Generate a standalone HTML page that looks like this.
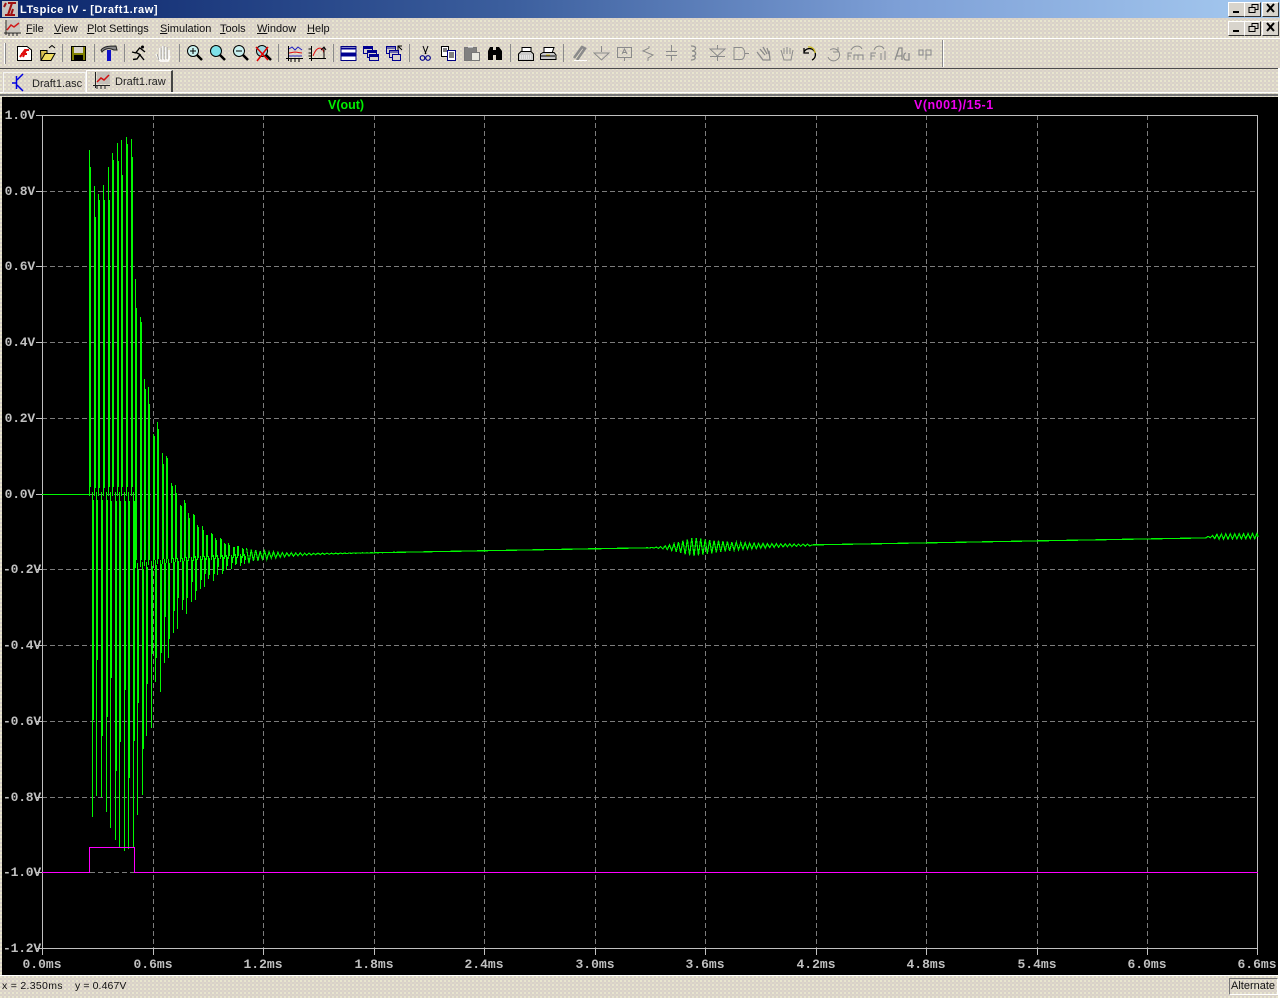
<!DOCTYPE html>
<html><head><meta charset="utf-8"><title>LTspice IV - [Draft1.raw]</title>
<style>
html,body{margin:0;padding:0;width:1280px;height:998px;overflow:hidden}
body{position:relative;font-family:"Liberation Sans",sans-serif;background-color:#d8d1c9;
background-image:radial-gradient(circle at 1px 1px,#f6f6d2 .75px,transparent .85px),radial-gradient(circle at 3px 3px,#efe6c8 .6px,transparent .7px);background-size:4px 4px}
.a{position:absolute;white-space:nowrap}
#title{left:0;top:0;width:1280px;height:18px;background:linear-gradient(90deg,#0a246a 0,#3c5f9e 40%,#7d9fd6 70%,#a6caf0 100%)}
#tt{left:20px;top:3px;color:#fff;font:bold 11px/14px "Liberation Sans",sans-serif;letter-spacing:.55px}
.m{top:23px;font:11px/13px "Liberation Sans",sans-serif;color:#111}
.m u{text-decoration:underline}
.b{width:15px;height:13px;background:#d8d4cc;border-top:1px solid #fff;border-left:1px solid #fff;border-right:1px solid #333;border-bottom:1px solid #333}
.l{width:32px;text-align:right;left:3px;color:#c0c0c0;font:bold 13px/14px "Liberation Mono",monospace;letter-spacing:-.2px}
.x{width:60px;text-align:center;top:958px;color:#c0c0c0;font:bold 13px/14px "Liberation Mono",monospace}
</style></head><body>
<div class="a" id="title"></div>
<svg class="a" style="left:2px;top:1px" width="16" height="16"><rect width="16" height="16" fill="#c8c4c0"/><path d="M6 2H14M10 2L6 14M3 14H8M11 8L9 14H13M2 6L4 2" stroke="#a01010" stroke-width="2" fill="none"/></svg>
<div class="a" id="tt">LTspice IV - [Draft1.raw]</div>
<div class="a b" style="left:1228px;top:2px"></div><div class="a b" style="left:1244px;top:2px"></div><div class="a b" style="left:1262px;top:2px"></div>
<div class="a b" style="left:1228px;top:21px"></div><div class="a b" style="left:1244px;top:21px"></div><div class="a b" style="left:1262px;top:21px"></div>
<svg class="a" style="left:1228px;top:0" width="52" height="38" fill="none" stroke="#000">
<path d="M5 12H11M5 31H11" stroke-width="2"/>
<path d="M21 7.500h6v5h-6zM24 7V4.500h6v5h-3M21 26.500h6v5h-6zM24 26V23.500h6v5h-3"/>
<path d="M39 4L46 12M46 4L39 12M39 23L46 31M46 23L39 31" stroke-width="2"/></svg>

<svg class="a" style="left:4px;top:19px" width="18" height="18"><path d="M2 1V16M0 14H17M5 14v3M9 14v3M13 14v3" stroke="#222" fill="none"/><rect x="3" y="1" width="13" height="12" fill="#c0bdb8" opacity=".7"/><path d="M3 11L7 6L10 8L15 4" stroke="#d01818" stroke-width="1.5" fill="none"/></svg>
<div class="a m" style="left:26px"><u>F</u>ile</div>
<div class="a m" style="left:54px"><u>V</u>iew</div>
<div class="a m" style="left:87px"><u>P</u>lot Settings</div>
<div class="a m" style="left:160px"><u>S</u>imulation</div>
<div class="a m" style="left:220px"><u>T</u>ools</div>
<div class="a m" style="left:257px"><u>W</u>indow</div>
<div class="a m" style="left:307px"><u>H</u>elp</div>

<div class="a" style="left:0;top:38px;width:1280px;height:1px;background:#fff"></div>
<div class="a" style="left:0;top:68px;width:1278px;height:1px;background:#4a4a4a"></div>
<div class="a" style="left:1278px;top:68px;width:2px;height:930px;background:#fff"></div>
<div class="a" style="left:0;top:92px;width:1278px;height:1px;background:#fff"></div>
<div class="a" style="left:0;top:94px;width:1278px;height:2px;background:#777"></div>

<svg class="a" style="left:0;top:38px" width="1000" height="31" fill="none">
<g transform="translate(0,-38)">
<path d="M4.500 43V64" stroke="#fff" stroke-width="1"/><path d="M5.500 43V64" stroke="#888"/>
<g stroke="#8a8a8a"><path d="M62.500 44V62M94.500 44V62M124.500 44V62M179.500 44V62M278.500 44V62M333.500 44V62M409.500 44V62M510.500 44V62M563.500 44V62"/></g>
<path d="M942.500 40V67" stroke="#8a8a8a"/><path d="M943.500 40V67" stroke="#fff"/>
<!-- new -->
<path d="M17.500 46.500H27L31.500 50V60.500H17.500Z" fill="#fff" stroke="#000"/><path d="M20 57L25 50H29M26 50L23 57M21 54H27" stroke="#e01010" stroke-width="2"/>
<!-- open -->
<path d="M40.500 50.500H47V60.500H41Z" fill="#d8c050" stroke="#000"/><path d="M41 60.500L45 53.500H55L51 60.500Z" fill="#f0dc60" stroke="#000"/><path d="M49 48L52 45.500L55 48" stroke="#000"/>
<!-- save -->
<rect x="71.500" y="46.500" width="14" height="14" fill="#808000" stroke="#000"/><rect x="74" y="47" width="9" height="6" fill="#d8d4cc"/><rect x="74" y="55" width="9" height="5" fill="#000"/>
<!-- hammer -->
<path d="M101 50C104 46 110 46 116 46L117 50H114C110 48 105 48 102 52Z" fill="#888" stroke="#222"/><rect x="107" y="50" width="4" height="11" fill="#1010c8"/>
<!-- runner -->
<path d="M140 47.500L136 52.500L140 54.500L137 59L133 59.500M136 53L132 52M140 48L145 52M140 55L144 60" stroke="#000" stroke-width="1.400"/><circle cx="142.500" cy="47" r="1.500" fill="#000"/>
<!-- hand -->
<path d="M160 61L156 54M160 60V48M163 60V46M166 60V47M169 60V50M160 61H168L170 56" stroke="#fff" stroke-width="1.500"/><path d="M159 60L157 54M161 59V48M164 59V46M167 59V47" stroke="#888" stroke-width=".7"/>
<!-- zooms -->
<g stroke="#000"><circle cx="193" cy="51" r="5.500" fill="#c8f0f0"/><path d="M197 55L202 60" stroke-width="2.500"/><path d="M190 51H196M193 48V54"/>
<circle cx="216" cy="51" r="5.500" fill="#7ee0e8"/><path d="M220 55L225 60" stroke-width="2.500"/>
<circle cx="239" cy="51" r="5.500" fill="#c8f0f0"/><path d="M243 55L248 60" stroke-width="2.500"/><path d="M236 51H242"/>
<circle cx="262" cy="51" r="5.500" fill="#a0d8e0"/><path d="M266 55L271 60" stroke-width="2.500"/></g>
<path d="M256 47L268 60M268 47L257 61" stroke="#e00000" stroke-width="1.500"/>
<!-- plots -->
<path d="M288.500 46V61M286 58.500H303M291 59v3M295 59v3M299 59v3" stroke="#000"/><path d="M289 49L292 47L295 50L298 47L302 50" stroke="#2020c0"/><path d="M289 53L295 52L302 53" stroke="#e01010"/><path d="M289 56H302" stroke="#2020c0"/>
<path d="M311.500 46V61M309 58.500H326M308.500 49h3M308.500 53h3M308.500 56h3" stroke="#000"/><path d="M313 56C317 45 323 47 324 53" stroke="#e01010"/><path d="M324 48V58M321 50L324 47L326 50" stroke="#000"/>
<!-- windows -->
<rect x="341" y="46.500" width="15" height="14" fill="#fff" stroke="#000080"/><path d="M341 48.500H356M341 53.500H356M341 55.500H356" stroke="#000090" stroke-width="2"/>
<g stroke="#000090" fill="#d8d4cc"><rect x="363.500" y="46.500" width="9" height="7"/><rect x="367.500" y="50.500" width="9" height="7"/><rect x="369.500" y="54.500" width="9" height="6"/><path d="M364 48H372M368 52H376M370 56H378" stroke-width="2"/></g>
<g stroke="#000090" fill="#d8d4cc"><rect x="386.500" y="46.500" width="9" height="7"/><rect x="389.500" y="50.500" width="9" height="7"/><rect x="392.500" y="54.500" width="8" height="6"/><path d="M387 48H395M390 52H398"/></g><path d="M398 50V46H402M398 46L402 50" stroke="#000"/>
<!-- edit -->
<path d="M423 46L426 54M428 46L425 54" stroke="#000"/><circle cx="422.500" cy="58" r="2.300" stroke="#00008a" stroke-width="1.200"/><circle cx="428" cy="58" r="2.300" stroke="#00008a" stroke-width="1.200"/>
<rect x="441.500" y="46.500" width="7" height="10" fill="#fff" stroke="#000"/><rect x="447.500" y="50.500" width="8" height="10" fill="#fff" stroke="#000080"/><path d="M449 53h5M449 55h5M449 57h5M443 49h4M443 51h4" stroke="#000"/>
<rect x="464.500" y="47.500" width="12" height="13" fill="#808080" stroke="#777"/><rect x="471.500" y="52.500" width="8" height="8" fill="#e8e8e0" stroke="#777"/><path d="M468 47h5" stroke="#fff"/>
<path d="M488 60V51L490 47H493V60ZM496 60V47H499L502 51V60Z" fill="#000"/><path d="M493 50H496V55H493Z" fill="#000"/>
<!-- printers -->
<path d="M522 47.500H531V52H522Z" fill="#fff" stroke="#000"/><path d="M518.500 60.500V54L521 51.500H531L533.500 54V60.500Z" fill="#ccc" stroke="#000"/><path d="M520 58h12M520 56h12" stroke="#fff" stroke-dasharray="1 1"/>
<path d="M544 47.500H554L552 53H544Z" fill="#fff" stroke="#000"/><path d="M540.500 59.500V54L543 52.500H554L556 55V59.500Z" fill="#c8c8c8" stroke="#000"/><path d="M541 56H555" stroke="#000"/><path d="M546 55h4" stroke="#d8c020"/>
<!-- disabled -->
<g stroke="#8a8a8a"><path d="M574 58L582 47L585 48.500L577 60" stroke-width="2.500"/><path d="M574 60.500H587" stroke="#fff"/><path d="M601.500 46V52M594 53H609L601.500 60Z" fill="none"/><rect x="617.500" y="47.500" width="14" height="10" stroke-width="1"/><path d="M624.500 58V61M622 54L624.500 49L627 54M623 52.500H626"/>
<path d="M649 46V48L643 51L653 55L648 58V61"/><path d="M666 51.500H677M666 55.500H677M671.500 45V51M671.500 56V61"/><path d="M691 46C697 46 697 50 692 51C697 51 697 56 692 56C697 56 696 60 691 60" stroke-width="1.300"/><path d="M710 49H725L717.500 56ZM710 56.500H725M717.500 45V49M717.500 57V61"/><path d="M734 47.500H741C746 47.500 746 59.500 741 59.500H734ZM734 47.500V59.500M745 53.500H749"/><path d="M757 52L763 60H770L769 51M760 49L765 55M763 47L767 54M767 48L769 54" stroke-width="1.300"/><path d="M781 50L784 60H791L793 50M784 48V54M787 47V54M790 48V54"/>
<path d="M830 50A6 6 0 1 1 828 57M838 47V52H833"/><path d="M848 60V53H852M848 56H851M854 60V55H863V60M858 55V60M851 50C854 45 860 45 862 49"/><path d="M871 60V53H876M871 56H875M881 53V60M885 51V60M874 50C876 45 882 45 884 49"/><path d="M895 60L899 48H902V60M897 56H902M906 53C903 53 903 60 906 60H909V53" stroke-width="1.300"/><path d="M919 50H923V55H919ZM926 50H931V55H926ZM926 55V60"/></g>
<path d="M804 48V53H809" stroke="#000" stroke-width="1.300"/><path d="M804 52A6 6 0 1 1 812 60" stroke="#000" stroke-width="1.300"/><path d="M808 47A6 6 0 0 1 815 53" stroke="#c8b820" stroke-width="1.300"/>
</g></svg>

<div class="a" style="left:3px;top:72px;width:81px;height:19px;border:1px solid #f4f4f4;border-right-color:#eee"></div>
<div class="a" style="left:86px;top:70px;width:84px;height:21px;border-top:1px solid #fff;border-left:1px solid #fff;border-right:2px solid #444"></div>
<svg class="a" style="left:0;top:69px" width="130" height="24" fill="none">
<path d="M12 14H16M16.500 7V20M17 11L23 5M17 16L23 22" stroke="#0000e0" stroke-width="1.500"/>
<path d="M95.500 3V19M93 16.500H110M97 17v3M101 17v3M105 17v3" stroke="#222"/><rect x="97" y="3" width="13" height="12" fill="#bdb9b4" opacity=".8"/><path d="M97 13L101 9L104 11L109 6" stroke="#d01010" stroke-width="1.500"/>
</svg>
<div class="a" style="left:32px;top:77px;font-size:11px;line-height:14px;color:#222">Draft1.asc</div>
<div class="a" style="left:115px;top:75px;font-size:11px;line-height:14px;color:#222">Draft1.raw</div>

<div class="a" style="left:2px;top:97px;width:1276px;height:878px;background:#000"></div>
<svg class="a" id="plot" style="left:0;top:0" width="1280" height="998" fill="none" shape-rendering="crispEdges">
<g stroke="#7c7c7c" stroke-dasharray="5 3">
<path d="M42 191.500H1258M42 266.500H1258M42 342.500H1258M42 418.500H1258M42 494.500H1258M42 569.500H1258M42 645.500H1258M42 721.500H1258M42 797.500H1258M42 872.500H1258"/>
<path d="M153.500 115V948M263.500 115V948M374.500 115V948M484.500 115V948M595.500 115V948M705.500 115V948M816.500 115V948M926.500 115V948M1037.500 115V948M1147.500 115V948"/>
</g>
<rect x="42.500" y="115.500" width="1215" height="833" stroke="#c0c0c0"/>
<path d="M36 115.500H42M36 191.500H42M36 266.500H42M36 342.500H42M36 418.500H42M36 494.500H42M36 569.500H42M36 645.500H42M36 721.500H42M36 797.500H42M36 872.500H42M36 948.500H42M42.500 948V955M153.500 948V955M263.500 948V955M374.500 948V955M484.500 948V955M595.500 948V955M705.500 948V955M816.500 948V955M926.500 948V955M1037.500 948V955M1147.500 948V955M1257.500 948V955" stroke="#c0c0c0"/>
<path id="g1" stroke="#00f800" stroke-width="1.200"/>
<path d="M42 872.500H89.500V847.500H134.500V872.500H1258" stroke="#ff00ff" stroke-width="1.400"/>
</svg>

<div class="a" style="left:328px;top:98px;color:#00f000;font:bold 12.500px/15px 'Liberation Sans',sans-serif">V(out)</div>
<div class="a" style="left:914px;top:98px;color:#f000f0;font:bold 12.500px/15px 'Liberation Sans',sans-serif;letter-spacing:.5px">V(n001)/15-1</div>

<div class="a l" style="top:109px">1.0V</div>
<div class="a l" style="top:185px">0.8V</div>
<div class="a l" style="top:260px">0.6V</div>
<div class="a l" style="top:336px">0.4V</div>
<div class="a l" style="top:412px">0.2V</div>
<div class="a l" style="top:488px">0.0V</div>
<div class="a l" style="top:563px">-0.2V</div>
<div class="a l" style="top:639px">-0.4V</div>
<div class="a l" style="top:715px">-0.6V</div>
<div class="a l" style="top:791px">-0.8V</div>
<div class="a l" style="top:866px">-1.0V</div>
<div class="a l" style="top:942px">-1.2V</div>

<div class="a x" style="left:12px">0.0ms</div>
<div class="a x" style="left:123px">0.6ms</div>
<div class="a x" style="left:233px">1.2ms</div>
<div class="a x" style="left:344px">1.8ms</div>
<div class="a x" style="left:454px">2.4ms</div>
<div class="a x" style="left:565px">3.0ms</div>
<div class="a x" style="left:675px">3.6ms</div>
<div class="a x" style="left:786px">4.2ms</div>
<div class="a x" style="left:896px">4.8ms</div>
<div class="a x" style="left:1007px">5.4ms</div>
<div class="a x" style="left:1117px">6.0ms</div>
<div class="a x" style="left:1227px">6.6ms</div>

<div class="a" style="left:0;top:975px;width:1278px;height:1px;background:#fff"></div>
<div class="a" style="left:2px;top:980px;font-size:10.500px;line-height:13px;letter-spacing:.3px;color:#111">x = 2.350ms</div>
<div class="a" style="left:75px;top:980px;font-size:10.500px;line-height:13px;letter-spacing:.1px;color:#111">y = 0.467V</div>
<div class="a" style="left:1229px;top:978px;width:47px;height:15px;border-top:1px solid #777;border-left:1px solid #777;border-right:1px solid #fff;border-bottom:1px solid #fff;font-size:11px;line-height:15px;color:#111;text-indent:1px">Alternate</div>

<script>
(function(){
function bl(x){return 554-(x-300)*0.0178}
var pts=[[89.5,150],[92,817],[94,186],[96.5,796],[98.5,194],[101.5,797],[103.5,185],[106,812],[108,167],[110.5,828],[112.5,153],[115,840],[117,143],[119.7,848],[121.5,140],[124.3,851],[126.5,137],[128.7,849],[131,139],[133.3,847],[135.5,279],[137.7,815]];
var fac=[1,.86,.95,.8,1,.9],k=0,x,i;
for(x=140;x<1258;x+=2.225,k++){
 var c,a,s=k%2==0?-1:1,f=fac[Math.floor(k/2)%6];
 a=248*Math.exp(-(x-140)/31)*f;
 c=bl(x)+8*Math.exp(-(x-140)/50);
 if(x>=648){a=x<696?9*Math.exp(-Math.pow((x-696)/24,2)):9*Math.exp(-(x-696)/50);a*=(.85+.15*f);}
 if(x>810)a=0;
 if(x>1206){a=2.6*Math.min(1,(x-1206)/12);c-=1;}
 pts.push([x,c+s*a]);
}
pts.push([1258,537]);
function R(v){return Math.floor(v)+.5}
var d="M42 494.500H90",sh=[.05,.3,.1,.45,.02,.2];
var line="",started=false;
for(i=0;i<pts.length;i++){
 var p=pts[i],xx=p[0],y=p[1];
 if(xx<245){
  var cc=xx<135?494:bl(xx)+8*Math.exp(-(xx-140)/50);
  var A=Math.abs(y-cc),dir=y<cc?1:-1;
  var X=R(xx);
  d+="M"+X+" "+y.toFixed(0)+"V"+(cc+dir*2).toFixed(0);
  d+="M"+(X+1)+" "+(y+dir*A*sh[i%6]).toFixed(0)+"V"+(cc-dir*A*.02).toFixed(0);
 }else{
  if(!started){line="M"+R(xx)+" "+y.toFixed(1);started=true;}
  else line+="L"+xx.toFixed(2)+" "+y.toFixed(1);
 }
}
document.getElementById("g1").setAttribute("d",d+line);
})();
</script>
</body></html>
